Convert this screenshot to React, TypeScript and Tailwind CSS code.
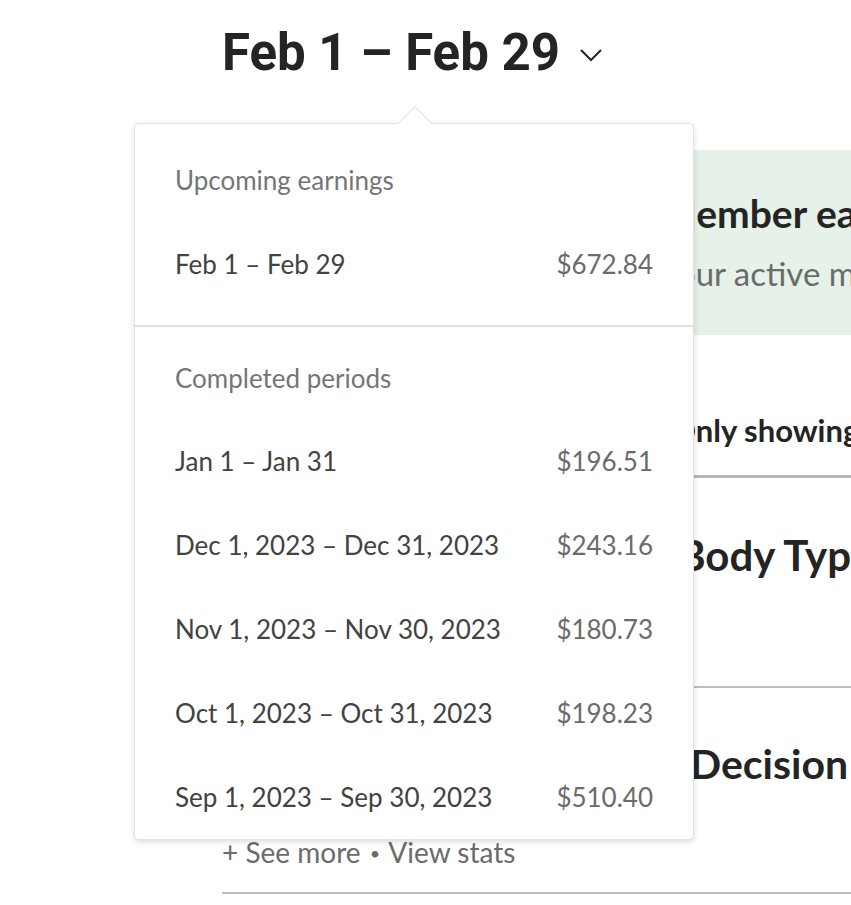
import React from "react";

const periods: { label: string; amount: string }[] = [
  { label: "Jan 1 – Jan 31", amount: "$196.51" },
  { label: "Dec 1, 2023 – Dec 31, 2023", amount: "$243.16" },
  { label: "Nov 1, 2023 – Nov 30, 2023", amount: "$180.73" },
  { label: "Oct 1, 2023 – Oct 31, 2023", amount: "$198.23" },
  { label: "Sep 1, 2023 – Sep 30, 2023", amount: "$510.40" },
];

function Row({ label, amount }: { label: string; amount: string }) {
  return (
    <div className="h-[84px] flex items-center justify-between pl-[40px] pr-[40px]">
      <span className="text-[26px] text-[#424242]">{label}</span>
      <span className="text-[26px] text-[#6b6b6b]">{amount}</span>
    </div>
  );
}

export default function App() {
  return (
    <div className="relative w-[851px] h-[905px] overflow-hidden bg-white font-['Lato',sans-serif]">
      <div className="pl-[222px] w-[1400px]">
        <header className="h-[104px] flex items-center">
          <h1 className="font-['Roboto',sans-serif] font-bold text-[51px] leading-none text-[#242424] tracking-[0px]">
            Feb 1 – Feb 29
          </h1>
          <svg className="ml-[19px] mt-[6px]" width="24" height="14" viewBox="0 0 24 14" fill="none">
            <path d="M2 2 L12 12 L22 2" stroke="#242424" strokeWidth="2" />
          </svg>
        </header>

        <section className="mt-[46px] ml-[414px] h-[185px] bg-[#e6f1e9] px-6 pt-[42px]">
          <h2 className="text-[39px] leading-[42px] font-bold text-[#242424] whitespace-nowrap">
            Member earnings
          </h2>
          <p className="mt-[19px] text-[33px] leading-[40px] text-[#6b6b6b] whitespace-nowrap">
            Your active members
          </p>
        </section>

        <div className="pt-[78px] pb-[28px] border-b-[3px] border-[#b5b5b5]">
          <p className="ml-[449px] text-[31px] leading-[34px] font-bold text-[#242424] whitespace-nowrap">
            Only showing
          </p>
        </div>

        <div className="pt-[52px] pb-[106px] border-b-2 border-[#bdbdbd]">
          <h3 className="ml-[456px] text-[42px] leading-[50px] font-bold text-[#242424] whitespace-nowrap">
            Body Types
          </h3>
        </div>

        <div className="pt-[51px] w-[629px] border-b-2 border-[#bdbdbd] pb-[22px]">
          <h3 className="ml-[468px] text-[41px] leading-[50px] font-bold text-[#242424] whitespace-nowrap">
            Decision
          </h3>
          <p className="mt-[46px] text-[28px] leading-[34px] text-[#6b6b6b] whitespace-nowrap">
            + See more <span className="text-[18px] align-[3px] mx-[2px]">•</span> View stats
          </p>
        </div>
      </div>

      <div className="absolute left-[134px] top-[123px] w-[560px] bg-white border border-[#e2e2e2] rounded-[5px] shadow-[0_2px_6px_rgba(0,0,0,0.14)]">
        <div className="absolute left-[268px] -top-[13px] w-[24px] h-[24px] bg-white border-l border-t border-[#e2e2e2] rotate-45" />
        <div className="relative pt-[14px] pb-[19px] border-b-2 border-[#e0e0e0]">
          <div className="h-[84px] flex items-center pl-[40px] text-[26px] text-[#757575]">
            Upcoming earnings
          </div>
          <Row label="Feb 1 – Feb 29" amount="$672.84" />
        </div>
        <div className="pt-[10px]">
          <div className="h-[82px] flex items-center pl-[40px] text-[26px] text-[#757575]">
            Completed periods
          </div>
          {periods.map((p) => (
            <Row key={p.label} label={p.label} amount={p.amount} />
          ))}
        </div>
      </div>
    </div>
  );
}
